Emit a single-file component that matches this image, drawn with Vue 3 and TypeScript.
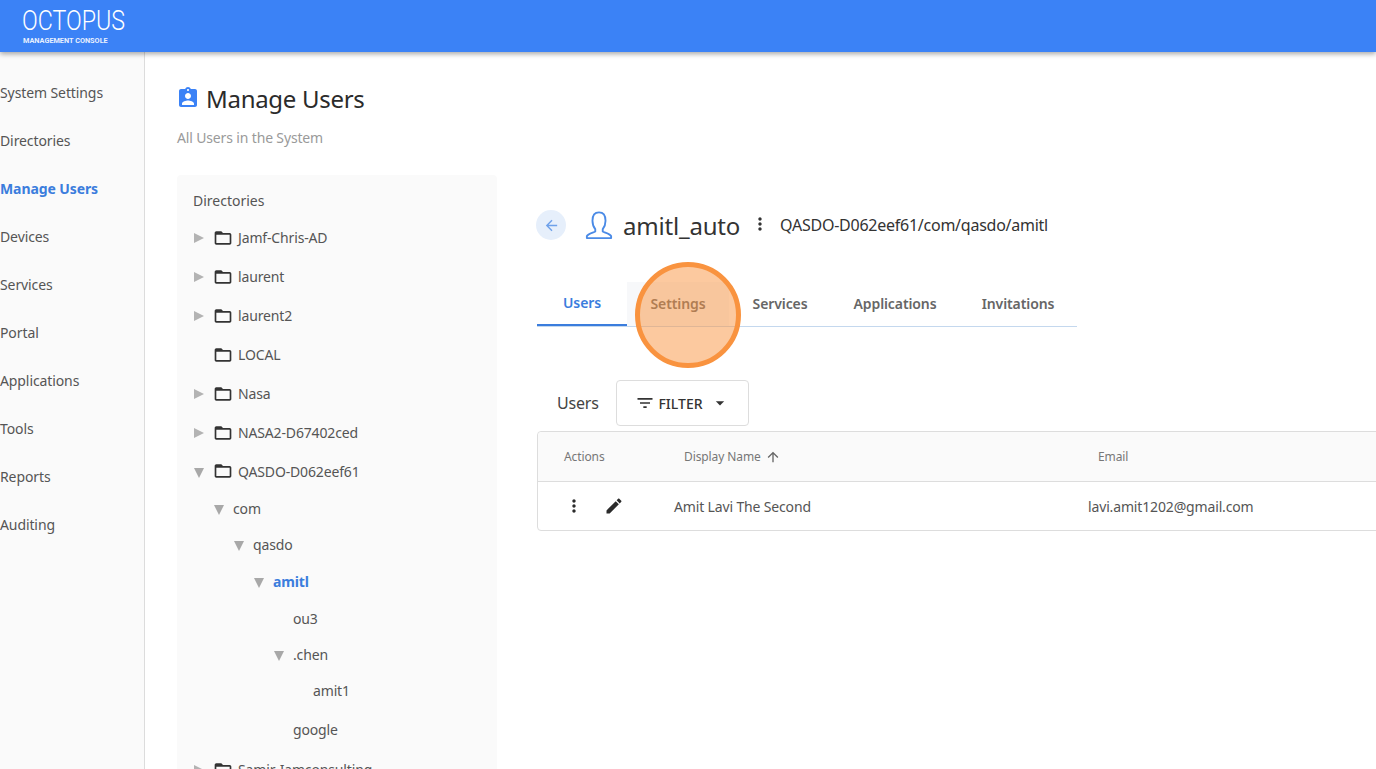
<script setup lang="ts">
interface TreeRow { label: string; depth: number; arrow?: 'right' | 'down'; folder?: boolean; size: string; active?: boolean }
const navItems: string[] = ['System Settings', 'Directories', 'Manage Users', 'Devices', 'Services', 'Portal', 'Applications', 'Tools', 'Reports', 'Auditing']
const tree: TreeRow[] = [
  { label: 'Jamf-Chris-AD', depth: 0, arrow: 'right', folder: true, size: 'r39' },
  { label: 'laurent', depth: 0, arrow: 'right', folder: true, size: 'r39' },
  { label: 'laurent2', depth: 0, arrow: 'right', folder: true, size: 'r39' },
  { label: 'LOCAL', depth: 0, folder: true, size: 'r39' },
  { label: 'Nasa', depth: 0, arrow: 'right', folder: true, size: 'r39' },
  { label: 'NASA2-D67402ced', depth: 0, arrow: 'right', folder: true, size: 'r39' },
  { label: 'QASDO-D062eef61', depth: 0, arrow: 'down', folder: true, size: 'r38' },
  { label: 'com', depth: 1, arrow: 'down', size: 'r36' },
  { label: 'qasdo', depth: 2, arrow: 'down', size: 'r37' },
  { label: 'amitl', depth: 3, arrow: 'down', size: 'r37', active: true },
  { label: 'ou3', depth: 4, size: 'r36' },
  { label: '.chen', depth: 4, arrow: 'down', size: 'r36' },
  { label: 'amit1', depth: 5, size: 'r37' },
  { label: 'google', depth: 4, size: 'r41' },
  { label: 'Samir-Iamconsulting-', depth: 0, arrow: 'right', folder: true, size: 'r39' }
]
const tabs: string[] = ['Users', 'Settings', 'Services', 'Applications', 'Invitations']
</script>

<template>
  <div class="page">
    <header class="topbar">
      <div class="logo">
        <span class="logo-main">OCTOPUS</span>
        <span class="logo-sub">MANAGEMENT CONSOLE</span>
      </div>
    </header>
    <div class="body">
      <nav class="sidenav">
        <a v-for="n in navItems" :key="n" class="nav-item" :class="{ current: n === 'Manage Users' }">{{ n }}</a>
      </nav>
      <main class="content">
        <div class="title-row">
          <svg class="title-icon" viewBox="0 0 24 24"><path d="M19 3h-4.18C14.4 1.84 13.3 1 12 1c-1.3 0-2.4.84-2.82 2H5c-1.1 0-2 .9-2 2v14c0 1.1.9 2 2 2h14c1.1 0 2-.9 2-2V5c0-1.1-.9-2-2-2zm-7 0c.55 0 1 .45 1 1s-.45 1-1 1-1-.45-1-1 .45-1 1-1zm0 4c1.66 0 3 1.34 3 3s-1.34 3-3 3-3-1.34-3-3 1.34-3 3-3zm6 12H6v-1.4c0-2 4-3.1 6-3.1s6 1.1 6 3.1V19z"/></svg>
          <h1 class="title">Manage Users</h1>
        </div>
        <p class="subtitle">All Users in the System</p>
        <div class="columns">
          <aside class="tree">
            <div class="tree-head">Directories</div>
            <div v-for="r in tree" :key="r.label" class="tree-row" :class="r.size" :style="{ paddingLeft: r.depth * 20 + 'px' }">
              <span class="arrow-slot">
                <span v-if="r.arrow" class="arrow" :class="r.arrow"></span>
              </span>
              <svg v-if="r.folder" class="folder" viewBox="0 0 24 24"><path d="M20 6h-8l-2-2H4c-1.1 0-1.99.9-1.99 2L2 18c0 1.1.9 2 2 2h16c1.1 0 2-.9 2-2V8c0-1.1-.9-2-2-2zm0 12H4V8h16v10z"/></svg>
              <span class="tree-label" :class="{ active: r.active }">{{ r.label }}</span>
            </div>
          </aside>
          <section class="detail">
            <div class="detail-head">
              <button class="back"><svg viewBox="0 0 24 24"><path d="M20 11H7.83l5.59-5.59L12 4l-8 8 8 8 1.41-1.41L7.83 13H20v-2z"/></svg></button>
              <svg class="user-icon" viewBox="0 0 30 32" fill="none"><path d="M11 20.5c-1.2-1.5-3-4-3-9C8 6 10.5 2.5 15 2.5s7 3.5 7 9c0 5-1.800 7.500-3 9v2.500c2 1.200 8 2.500 9 5v2H2v-2c1-2.500 7-3.800 9-5v-2.500z" stroke-width="2" stroke-linejoin="round"/></svg>
              <span class="user-name">amitl_auto</span>
              <svg class="kebab" viewBox="0 0 24 24"><path d="M12 8c1.100 0 2-.9 2-2s-.9-2-2-2-2 .9-2 2 .9 2 2 2zm0 2c-1.100 0-2 .9-2 2s.9 2 2 2 2-.9 2-2-.9-2-2-2zm0 6c-1.100 0-2 .9-2 2s.9 2 2 2 2-.9 2-2-.9-2-2-2z"/></svg>
              <span class="path">QASDO-D062eef61/com/qasdo/amitl</span>
            </div>
            <div class="tabs">
              <div v-for="t in tabs" :key="t" class="tab" :class="[t.toLowerCase(), { selected: t === 'Users' }]">{{ t }}</div>
              <div class="click-mark"></div>
            </div>
            <div class="toolbar">
              <span class="toolbar-label">Users</span>
              <button class="filter">
                <svg class="filter-icon" viewBox="0 0 24 24"><path d="M10 18h4v-2h-4v2zM3 6v2h18V6H3zm3 7h12v-2H6v2z"/></svg>
                <span>FILTER</span>
                <svg class="drop" viewBox="0 0 24 24"><path d="M7 10l5 5 5-5z"/></svg>
              </button>
            </div>
            <div class="table">
              <div class="thead">
                <span class="th th-actions">Actions</span>
                <span class="th th-name">Display Name <svg class="sort" viewBox="0 0 24 24"><path d="M4 12l1.410 1.410L11 7.830V20h2V7.830l5.580 5.590L20 12l-8-8-8 8z"/></svg></span>
                <span class="th th-email">Email</span>
              </div>
              <div class="trow">
                <span class="td-actions">
                  <svg class="row-icon" viewBox="0 0 24 24"><path d="M12 8c1.100 0 2-.9 2-2s-.9-2-2-2-2 .9-2 2 .9 2 2 2zm0 2c-1.100 0-2 .9-2 2s.9 2 2 2 2-.9 2-2-.9-2-2-2zm0 6c-1.100 0-2 .9-2 2s.9 2 2 2 2-.9 2-2-.9-2-2-2z"/></svg>
                  <svg class="row-icon" viewBox="0 0 24 24"><path d="M3 17.250V21h3.750L17.810 9.940l-3.750-3.750L3 17.250zM20.710 7.040c.39-.39.39-1.020 0-1.410l-2.340-2.340c-.39-.39-1.020-.39-1.410 0l-1.830 1.830 3.750 3.750 1.830-1.830z"/></svg>
                </span>
                <span class="td td-name">Amit Lavi The Second</span>
                <span class="td td-email">lavi.amit1202@gmail.com</span>
              </div>
            </div>
          </section>
        </div>
      </main>
    </div>
  </div>
</template>

<style>
html, body { margin: 0; height: 100%; overflow: hidden; background: #fff; }
</style>

<style scoped>
.page { width: 1376px; height: 769px; overflow: hidden; display: flex; flex-direction: column; font-family: "Noto Sans", "Open Sans", sans-serif; color: #333; font-size: 14px; }
.topbar { flex: 0 0 52px; height: 52px; background: #3b82f6; box-shadow: 0 2px 5px rgba(0,0,0,.35); position: relative; z-index: 2; padding-left: 22px; box-sizing: border-box; }
.logo { display: flex; flex-direction: column; width: 96px; color: #fff; }
.logo-main { font-family: Roboto, sans-serif; font-weight: 300; font-size: 27px; line-height: 27px; margin-top: 8px; letter-spacing: 0; transform: scaleX(.86); transform-origin: left center; white-space: nowrap; }
.logo-sub { font-family: Roboto, sans-serif; font-weight: 700; font-size: 7.300px; line-height: 9px; margin-top: 1px; margin-left: 1px; white-space: nowrap; color: #e8f0fe; }
.body { flex: 1; display: flex; min-height: 0; }
.sidenav { flex: 0 0 144px; background: #fafafa; border-right: 1px solid #dcdcdc; padding-top: 16px; }
.nav-item { display: flex; align-items: center; height: 48px; color: #555; font-size: 14px; letter-spacing: -.1px; }
.nav-item.current { color: #3b7ddd; font-weight: 700; }
.content { flex: 1; min-width: 0; padding: 28px 0 0 32px; }
.title-row { display: flex; align-items: center; height: 36px; }
.title-icon { width: 24px; height: 24px; fill: #3b82f6; margin-left: -1px; margin-right: 6px; }
.title { margin: 0; font-size: 24px; font-weight: 400; color: #2b2b2b; letter-spacing: -.3px; }
.subtitle { margin: 12px 0 0; font-size: 14px; line-height: 20px; color: #9a9a9a; letter-spacing: -.15px; }
.columns { display: flex; gap: 40px; margin-top: 27px; }
.tree { flex: 0 0 320px; background: #fafafa; box-sizing: border-box; padding: 14px 16px 0; height: 640px; border-radius: 4px; overflow: hidden; }
.tree-head { font-size: 14px; line-height: 24px; color: #555; margin-bottom: 5px; }
.tree-row { display: flex; align-items: center; color: #555; font-size: 14px; }
.r39 { height: 39px; } .r38 { height: 38px; } .r37 { height: 37px; } .r36 { height: 36px; } .r41 { height: 41px; }
.arrow-slot { flex: 0 0 20px; display: flex; align-items: center; padding-left: 1px; box-sizing: border-box; height: 100%; }
.arrow { display: block; width: 0; height: 0; }
.arrow.right { border-left: 10px solid #b3b3b3; border-top: 5px solid transparent; border-bottom: 5px solid transparent; }
.arrow.down { border-top: 10px solid #a8a8a8; border-left: 5.500px solid transparent; border-right: 5.500px solid transparent; margin-top: 3px; }
.folder { width: 20px; height: 20px; fill: #333; margin-right: 5px; flex: none; }
.tree-label { white-space: nowrap; letter-spacing: -.15px; }
.tree-label.active { color: #3b7ddd; font-weight: 700; }
.detail { flex: 0 0 auto; width: 1000px; padding-top: 35px; }
.detail-head { display: flex; align-items: center; height: 30px; }
.back { width: 30px; height: 30px; border-radius: 50%; background: #e6effb; border: 0; padding: 0; margin-left: -1px; display: flex; align-items: center; justify-content: center; }
.back svg { width: 17px; height: 17px; fill: #6ea1ea; }
.user-icon { width: 28px; height: 30px; stroke: #4a8ae6; margin-left: 19px; margin-right: 10px; }
.user-name { font-size: 24px; color: #333; letter-spacing: -.2px; }
.kebab { width: 20px; height: 20px; fill: #333; margin-left: 10px; margin-right: 10px; margin-top: -2px; }
.path { font-size: 16px; color: #333; letter-spacing: -.25px; }
.tabs { position: relative; display: flex; width: 540px; height: 44px; margin-top: 42px; border-bottom: 1px solid #c4d8ee; }
.tab { display: flex; align-items: center; justify-content: center; height: 44px; box-sizing: border-box; font-size: 14px; font-weight: 600; color: #666; letter-spacing: -.1px; padding-bottom: 1px; }
.tab.users { width: 90px; }
.tab.settings { width: 102px; background: #f7f8fa; }
.tab.services { width: 102px; }
.tab.applications { width: 128px; }
.tab.invitations { width: 118px; }
.tab.selected { color: #3b7ddd; border-bottom: 2px solid #3b7ddd; }
.click-mark { position: absolute; left: 98px; top: -20px; width: 106px; height: 106px; box-sizing: border-box; border-radius: 50%; border: 5px solid #f9933f; background: rgba(249,147,63,.5); }
.toolbar { display: flex; align-items: center; height: 46px; margin-top: 53px; padding-left: 20px; }
.toolbar-label { font-size: 16px; color: #444; width: 59px; letter-spacing: -.2px; }
.filter { width: 133px; height: 46px; box-sizing: border-box; background: #fff; border: 1px solid #ddd; border-radius: 4px; display: flex; align-items: center; justify-content: center; font-family: inherit; font-size: 14px; font-weight: 500; color: #333; padding: 0; }
.filter-icon { width: 20px; height: 20px; fill: #333; margin-right: 3px; }
.drop { width: 20px; height: 20px; fill: #333; margin-left: 7px; }
.table { margin-top: 5px; width: 1000px; border: 1px solid #ddd; border-radius: 4px; box-sizing: border-box; }
.thead { display: flex; align-items: center; height: 49px; background: #fafafa; border-bottom: 1px solid #ddd; border-radius: 4px 4px 0 0; }
.th { font-size: 12px; color: #777; display: flex; align-items: center; letter-spacing: -.1px; }
.th-actions { width: 120px; padding-left: 26px; box-sizing: border-box; }
.th-name { width: 414px; padding-left: 26px; box-sizing: border-box; margin-left: 0; gap: 4px; }
.th-email { padding-left: 26px; }
.sort { width: 16px; height: 16px; fill: #666; }
.trow { display: flex; align-items: center; height: 48px; }
.td-actions { width: 136px; display: flex; align-items: center; padding-left: 26px; box-sizing: border-box; gap: 20px; }
.row-icon { width: 20px; height: 20px; fill: #2b2b2b; }
.td { font-size: 14px; color: #555; letter-spacing: -.15px; }
.td-name { width: 414px; }
</style>
